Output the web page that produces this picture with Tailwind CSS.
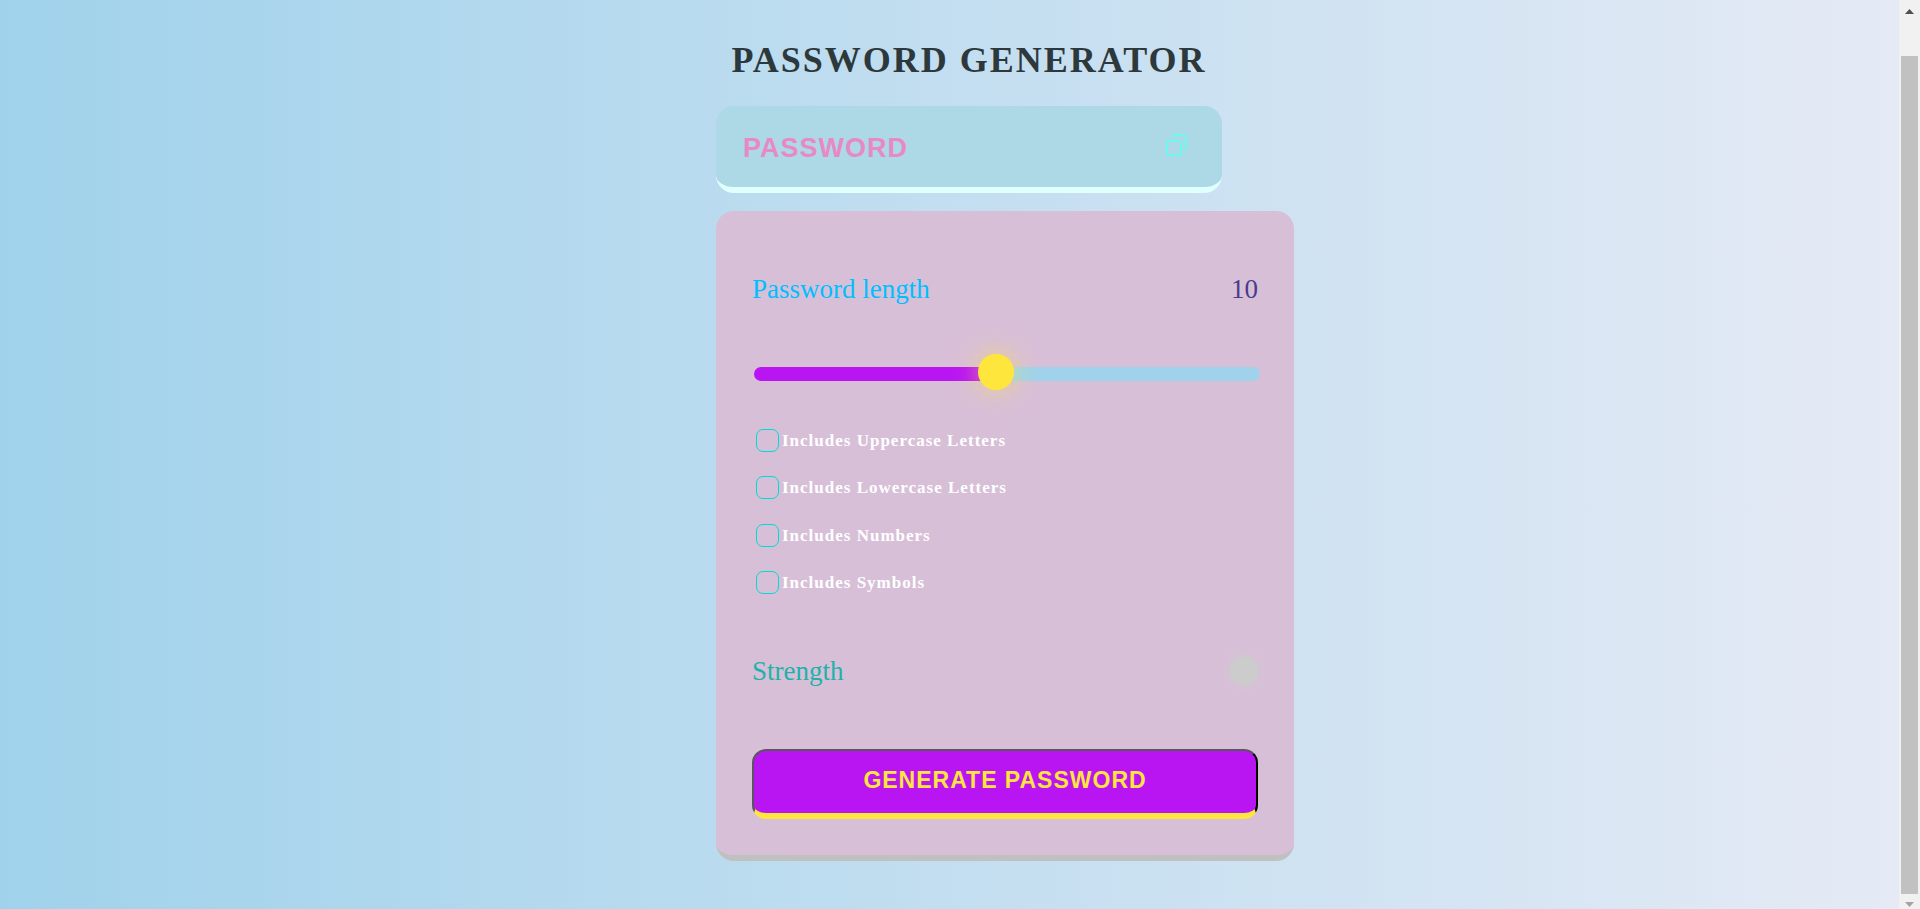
<!DOCTYPE html>
<html lang="en">
<head>
<meta charset="utf-8">
<meta name="viewport" content="width=device-width, initial-scale=1">
<title>Password Generator</title>
<script src="https://cdn.jsdelivr.net/npm/@tailwindcss/browser@4"></script>
</head>
<body class="flex min-h-screen bg-white font-['Liberation_Serif',serif]">
<main class="flex flex-1 justify-center bg-linear-to-r/srgb from-[#a0d2eb] to-[#e5eaf5] pt-9 pb-6">
  <div class="w-full max-w-[578px] lg:ml-[111px]">
    <h1 class="max-w-[506px] text-center text-[36px] leading-[48px] font-bold tracking-[2px] text-[#2d383c] uppercase">Password Generator</h1>
    <div class="mt-[22px] flex h-[87px] max-w-[506px] items-center rounded-[18px] border-b-6 border-[#e0ffff] bg-[#add8e6] pr-[34px] pl-[27px]">
      <input type="text" readonly placeholder="PASSWORD" aria-label="Password" class="h-10 min-w-0 flex-1 bg-transparent pt-1 font-['Liberation_Sans',sans-serif] text-[27px] font-bold tracking-[1px] text-[#e78ac3] outline-none placeholder:text-[#e78ac3]">
      <button type="button" aria-label="Copy password" class="pb-1 text-[#70f8f0]">
        <svg class="block size-[22px]" viewBox="0 0 22 22" fill="none" stroke="currentColor" stroke-width="2" aria-hidden="true"><rect x="1" y="7" width="14" height="14" rx="1"/><path d="M6 4V2.500Q6 1 7.500 1H19Q20 1 20 2V15H17"/></svg>
      </button>
    </div>
    <section class="mt-[18px] rounded-[18px] border-b-6 border-[#c0c0c0] bg-[#d8bfd8] px-9 pt-[62px] pb-9">
      <div class="flex items-center justify-between text-[27px] leading-8">
        <label for="length" class="text-[#00bfff]">Password length</label>
        <output for="length" class="text-[#483d8b]">10</output>
      </div>
      <input id="length" type="range" min="0" max="21" value="10" class="mt-[51px] ml-[2px] block h-9 w-full appearance-none bg-transparent [&::-webkit-slider-runnable-track]:h-[14px] [&::-webkit-slider-runnable-track]:rounded-[7px] [&::-webkit-slider-runnable-track]:bg-linear-to-r [&::-webkit-slider-runnable-track]:from-[#b915f3] [&::-webkit-slider-runnable-track]:from-48% [&::-webkit-slider-runnable-track]:to-[#a0d2eb] [&::-webkit-slider-runnable-track]:to-48% [&::-webkit-slider-thumb]:-mt-[13px] [&::-webkit-slider-thumb]:size-9 [&::-webkit-slider-thumb]:appearance-none [&::-webkit-slider-thumb]:rounded-full [&::-webkit-slider-thumb]:bg-[#ffe63d] [&::-webkit-slider-thumb]:shadow-[0_0_26px_0_#ffe63d99]">
      <div class="mt-9 ml-1 flex flex-col gap-6 text-[17px] leading-[23px] font-bold tracking-[1px] text-white">
        <div class="flex h-6 items-center gap-[3px]"><input id="uppercase" type="checkbox" class="size-[23px] appearance-none rounded-[7px] border border-[#00dbd4] checked:bg-[#00dbd4]"><label for="uppercase">Includes Uppercase Letters</label></div>
        <div class="flex h-[23px] items-center gap-[3px]"><input id="lowercase" type="checkbox" class="size-[23px] appearance-none rounded-[7px] border border-[#00dbd4] checked:bg-[#00dbd4]"><label for="lowercase">Includes Lowercase Letters</label></div>
        <div class="flex h-6 items-center gap-[3px]"><input id="numbers" type="checkbox" class="size-[23px] appearance-none rounded-[7px] border border-[#00dbd4] checked:bg-[#00dbd4]"><label for="numbers">Includes Numbers</label></div>
        <div class="flex h-[23px] items-center gap-[3px]"><input id="symbols" type="checkbox" class="size-[23px] appearance-none rounded-[7px] border border-[#00dbd4] checked:bg-[#00dbd4]"><label for="symbols">Includes Symbols</label></div>
      </div>
      <div class="mt-[61px] flex items-center justify-between text-[27px] leading-8 text-[#20b2aa]">
        <p>Strength</p>
        <span class="size-7 rounded-full bg-[#ccc] shadow-[0_0_12px_1px_#ccc]"></span>
      </div>
      <button type="button" class="mt-[62px] block h-[70px] w-full rounded-[14px] border-2 border-b-6 border-t-[#5b5560] border-r-black border-b-[#ffe63d] border-l-[#5b5560] bg-[#b915f3] pb-1 font-['Liberation_Sans',sans-serif] text-[23px] leading-7 font-bold tracking-[1px] text-[#ffe63d] uppercase">Generate Password</button>
    </section>
  </div>
</main>
<div class="flex w-[21px] shrink-0 flex-col items-center bg-[#f1f1f1]" aria-hidden="true">
  <svg class="h-14 w-[9px]" viewBox="0 0 9 56" fill="#505050"><path d="M4.500 9 9 14H0Z"/></svg>
  <div class="w-[17px] flex-1 bg-[#c1c1c1]"></div>
  <svg class="h-[15px] w-[9px]" viewBox="0 0 9 15" fill="#a3a3a3"><path d="M0 8H9L4.500 13Z"/></svg>
</div>
</body>
</html>
